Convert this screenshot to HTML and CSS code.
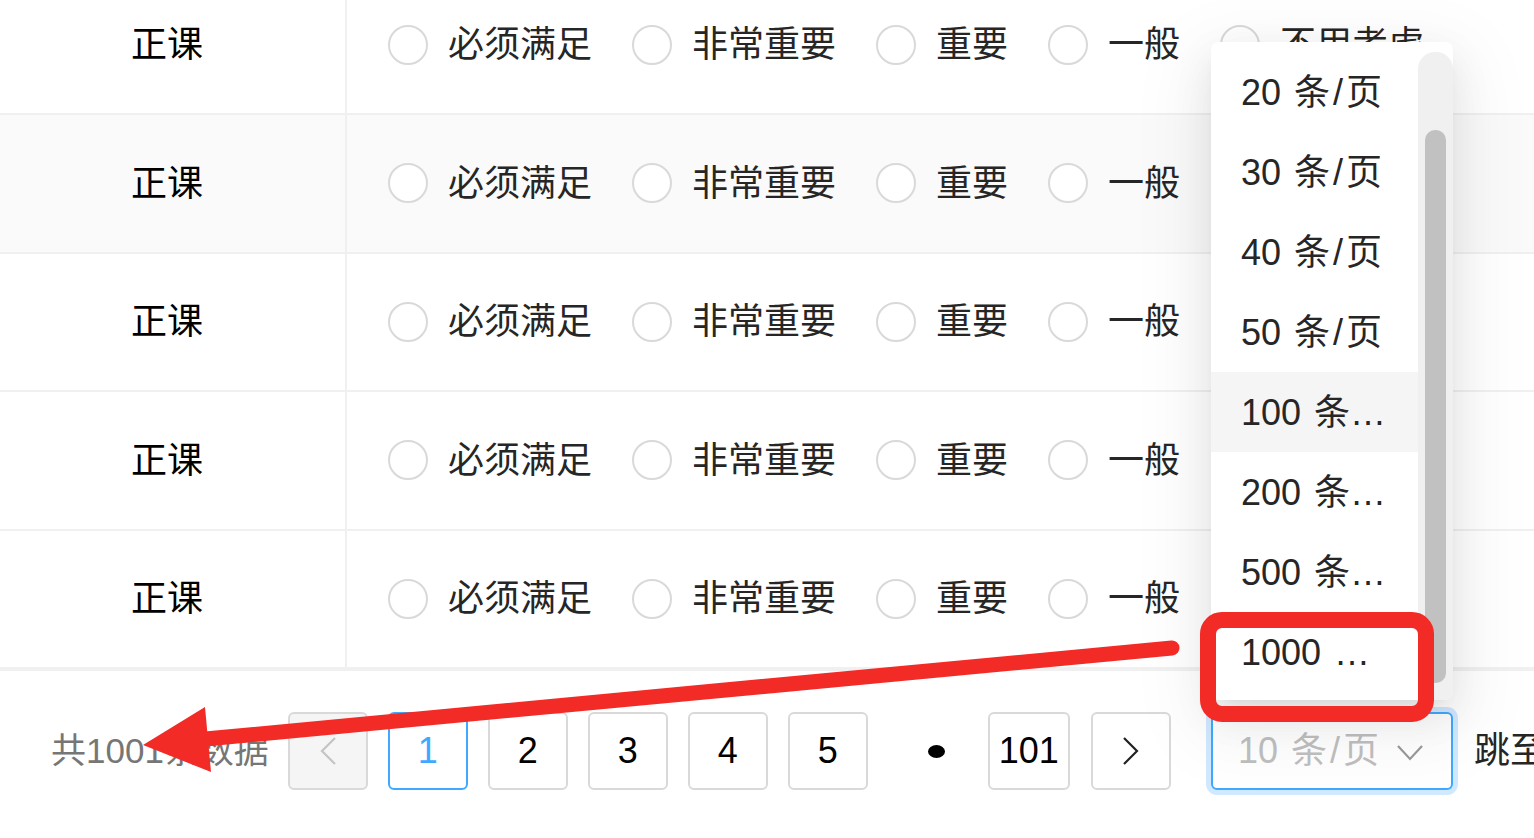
FILE: index.html
```html
<!DOCTYPE html>
<html lang="zh-CN">
<head>
<meta charset="utf-8">
<title>分页条数选择</title>
<link rel="stylesheet" href="styles.css">
</head>
<body>
<div class="page">
  <div class="table-viewport">
    <div class="table-body">
      <div class="row">
        <div class="cell-type">正课</div>
        <div class="cell-opts">
          <label class="radio"><span class="radio-circle"></span><span class="radio-label">必须满足</span></label>
          <label class="radio"><span class="radio-circle"></span><span class="radio-label">非常重要</span></label>
          <label class="radio"><span class="radio-circle"></span><span class="radio-label">重要</span></label>
          <label class="radio"><span class="radio-circle"></span><span class="radio-label">一般</span></label>
          <label class="radio"><span class="radio-circle"></span><span class="radio-label">不用考虑</span></label>
        </div>
      </div>
      <div class="row row-hover">
        <div class="cell-type">正课</div>
        <div class="cell-opts">
          <label class="radio"><span class="radio-circle"></span><span class="radio-label">必须满足</span></label>
          <label class="radio"><span class="radio-circle"></span><span class="radio-label">非常重要</span></label>
          <label class="radio"><span class="radio-circle"></span><span class="radio-label">重要</span></label>
          <label class="radio"><span class="radio-circle"></span><span class="radio-label">一般</span></label>
          <label class="radio"><span class="radio-circle"></span><span class="radio-label">不用考虑</span></label>
        </div>
      </div>
      <div class="row">
        <div class="cell-type">正课</div>
        <div class="cell-opts">
          <label class="radio"><span class="radio-circle"></span><span class="radio-label">必须满足</span></label>
          <label class="radio"><span class="radio-circle"></span><span class="radio-label">非常重要</span></label>
          <label class="radio"><span class="radio-circle"></span><span class="radio-label">重要</span></label>
          <label class="radio"><span class="radio-circle"></span><span class="radio-label">一般</span></label>
          <label class="radio"><span class="radio-circle"></span><span class="radio-label">不用考虑</span></label>
        </div>
      </div>
      <div class="row">
        <div class="cell-type">正课</div>
        <div class="cell-opts">
          <label class="radio"><span class="radio-circle"></span><span class="radio-label">必须满足</span></label>
          <label class="radio"><span class="radio-circle"></span><span class="radio-label">非常重要</span></label>
          <label class="radio"><span class="radio-circle"></span><span class="radio-label">重要</span></label>
          <label class="radio"><span class="radio-circle"></span><span class="radio-label">一般</span></label>
          <label class="radio"><span class="radio-circle"></span><span class="radio-label">不用考虑</span></label>
        </div>
      </div>
      <div class="row row-last">
        <div class="cell-type">正课</div>
        <div class="cell-opts">
          <label class="radio"><span class="radio-circle"></span><span class="radio-label">必须满足</span></label>
          <label class="radio"><span class="radio-circle"></span><span class="radio-label">非常重要</span></label>
          <label class="radio"><span class="radio-circle"></span><span class="radio-label">重要</span></label>
          <label class="radio"><span class="radio-circle"></span><span class="radio-label">一般</span></label>
          <label class="radio"><span class="radio-circle"></span><span class="radio-label">不用考虑</span></label>
        </div>
      </div>
    </div>
  </div>

  <div class="pager">
    <span class="pager-total">共1001条数据</span>
    <span class="pager-btn pager-disabled">
      <svg class="chev" width="16" height="28" viewBox="0 0 16 28"><path d="M15 1 L2 14 L15 27" fill="none" stroke="#c4c4c4" stroke-width="2.2"/></svg>
    </span>
    <span class="pager-btn pager-active">1</span>
    <span class="pager-btn">2</span>
    <span class="pager-btn">3</span>
    <span class="pager-btn">4</span>
    <span class="pager-btn">5</span>
    <span class="pager-ellipsis"><span class="pager-dot"></span></span>
    <span class="pager-btn pager-wide">101</span>
    <span class="pager-btn pager-next">
      <svg class="chev" width="16" height="28" viewBox="0 0 16 28"><path d="M1 1 L14 14 L1 27" fill="none" stroke="#222" stroke-width="2.2"/></svg>
    </span>
    <span class="size-select">
      <span class="size-value">10 条<span class="sl">/</span>页</span>
      <svg class="size-arrow" width="26" height="16" viewBox="0 0 26 16"><path d="M1 1 L13 14 L25 1" fill="none" stroke="#9a9a9a" stroke-width="2.2"/></svg>
    </span>
    <span class="pager-jump">跳至</span>
  </div>

  <div class="dropdown">
    <div class="dd-list">
      <div class="dd-option">20 条<span class="sl">/</span>页</div>
      <div class="dd-option">30 条<span class="sl">/</span>页</div>
      <div class="dd-option">40 条<span class="sl">/</span>页</div>
      <div class="dd-option">50 条<span class="sl">/</span>页</div>
      <div class="dd-option dd-hover">100 条<span class="sl">/</span>页</div>
      <div class="dd-option">200 条<span class="sl">/</span>页</div>
      <div class="dd-option">500 条<span class="sl">/</span>页</div>
      <div class="dd-option">1000 条<span class="sl">/</span>页</div>
    </div>
    <div class="dd-scroll">
      <div class="dd-track"><div class="dd-thumb"></div></div>
    </div>
  </div>

  <div class="annot-box"></div>
  <svg class="annot-arrow" width="1534" height="838" viewBox="0 0 1534 838">
    <line x1="1172" y1="648" x2="200" y2="739.5" stroke="#f22b27" stroke-width="15" stroke-linecap="round"/>
    <polygon points="143,745 205,707 211,772" fill="#f22b27"/>
  </svg>
</div>
</body>
</html>
```

FILE: styles.css
```css
html, body {
  margin: 0;
  padding: 0;
  background: #ffffff;
}

body {
  font-family: "Liberation Sans", "Noto Sans CJK SC", sans-serif;
  color: #262626;
}

.page {
  position: relative;
  width: 1534px;
  height: 838px;
  overflow: hidden;
  background: #ffffff;
}

/* ---------- table ---------- */
.table-viewport {
  height: 671px;
  overflow: hidden;
}

.table-body {
  margin-top: -23.5px;
}

.row {
  display: flex;
  height: 136.5px;
  border-bottom: 2px solid #f0f0f0;
  background: #ffffff;
}

.row-hover {
  background: #fafafa;
}

.row-last {
  border-bottom: 4px solid #f0f0f0;
}

.cell-type {
  width: 347px;
  flex: 0 0 347px;
  box-sizing: border-box;
  border-right: 2px solid #f0f0f0;
  display: flex;
  align-items: center;
  padding-left: 131px;
  font-size: 36px;
  line-height: 1.2;
  color: #000000;
  white-space: nowrap;
}

.cell-opts {
  flex: 1;
  display: flex;
  align-items: center;
  padding-left: 41px;
  white-space: nowrap;
  overflow: hidden;
}

.radio {
  display: flex;
  align-items: center;
  margin-right: 40px;
  flex-shrink: 0;
}

.radio-circle {
  width: 40px;
  height: 40px;
  box-sizing: border-box;
  border: 2px solid #d9d9d9;
  border-radius: 50%;
  background: #ffffff;
  flex: 0 0 40px;
}

.radio-label {
  margin-left: 20px;
  font-size: 36px;
  line-height: 1.2;
  color: #262626;
}

/* ---------- pagination ---------- */
.pager {
  display: flex;
  align-items: center;
  height: 78px;
  margin-top: 41px;
  padding-left: 51px;
  white-space: nowrap;
}

.pager > * {
  flex-shrink: 0;
}

.pager-total {
  font-size: 35px;
  line-height: 1.2;
  color: #767676;
  margin-right: 19px;
}

.pager-btn {
  width: 80px;
  height: 78px;
  box-sizing: border-box;
  border: 2px solid #d9d9d9;
  border-radius: 6px;
  margin-right: 20px;
  display: flex;
  align-items: center;
  justify-content: center;
  font-size: 36px;
  line-height: 1;
  color: #000000;
  background: #ffffff;
}

.pager-disabled {
  background: #f5f5f5;
}

.pager-active {
  border-color: #40a9ff;
  color: #40a9ff;
}

.pager-wide {
  width: 82px;
  margin-right: 21px;
}

.pager-next {
  margin-right: 40px;
}

.pager-ellipsis {
  width: 80px;
  height: 78px;
  margin-right: 20px;
  display: flex;
  align-items: center;
  justify-content: center;
}

.pager-dot {
  width: 17px;
  height: 13px;
  border-radius: 50%;
  background: #000000;
  margin-left: 18px;
}

.chev {
  display: block;
}

.size-select {
  width: 242px;
  height: 78px;
  box-sizing: border-box;
  border: 2px solid #40a9ff;
  border-radius: 6px;
  box-shadow: 0 0 0 5px rgba(24, 144, 255, 0.2);
  display: flex;
  align-items: center;
  padding-left: 25px;
  padding-right: 28px;
  margin-right: 21px;
  background: #ffffff;
}

.size-value {
  font-size: 36px;
  line-height: 1.2;
  color: #bfbfbf;
  word-spacing: 3px;
}

.sl {
  padding: 0 3px;
}

.size-arrow {
  display: block;
  margin-left: auto;
  margin-top: 4px;
}

.pager-jump {
  font-size: 36px;
  line-height: 1.2;
  color: #262626;
}

/* ---------- dropdown ---------- */
.dropdown {
  position: absolute;
  left: 1211px;
  top: 42px;
  width: 242px;
  height: 658px;
  display: flex;
  background: #ffffff;
  border-radius: 8px;
  overflow: hidden;
  box-shadow: 0 7px 15px -10px rgba(0, 0, 0, 0.12),
              0 15px 40px 0 rgba(0, 0, 0, 0.08),
              0 22px 70px 20px rgba(0, 0, 0, 0.05);
}

.dd-list {
  width: 207px;
  flex: 0 0 207px;
  padding-top: 10px;
}

.dd-option {
  height: 80px;
  line-height: 82px;
  padding: 0 28px 0 30px;
  font-size: 36px;
  color: #262626;
  white-space: nowrap;
  overflow: hidden;
  text-overflow: ellipsis;
  word-spacing: 3px;
}

.dd-hover {
  background: #f5f5f5;
}

.dd-scroll {
  width: 35px;
  flex: 0 0 35px;
  padding-top: 10px;
  display: flex;
  flex-direction: column;
}

.dd-track {
  flex: 1;
  background: #f0f0f0;
  border-radius: 17px 17px 0 0;
  padding: 78px 7px 17px 7px;
  display: flex;
}

.dd-thumb {
  flex: 1;
  background: #c1c1c1;
  border-radius: 10px;
}

/* ---------- annotations ---------- */
.annot-box {
  position: absolute;
  left: 1200px;
  top: 612px;
  width: 234px;
  height: 110px;
  box-sizing: border-box;
  border: 16px solid #f22b27;
  border-radius: 22px;
}

.annot-arrow {
  position: absolute;
  left: 0;
  top: 0;
  pointer-events: none;
}
```
